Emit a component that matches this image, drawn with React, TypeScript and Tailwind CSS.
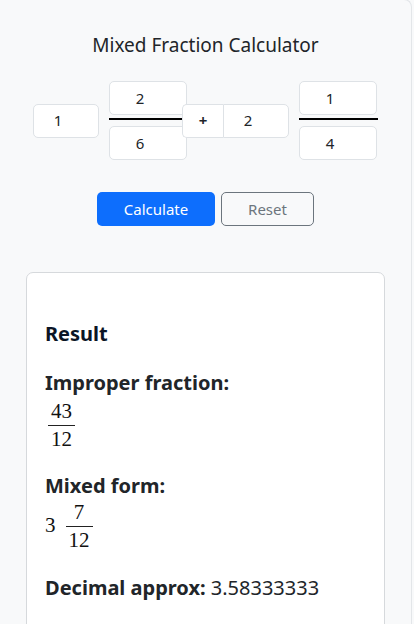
import React from "react";

const sans = { fontFamily: '"Noto Sans", "Open Sans", sans-serif' };
const serif = { fontFamily: '"Liberation Serif", "DejaVu Serif", serif' };

function Frac({ n, d, w }: { n: string; d: string; w: string }) {
  return (
    <span className="inline-flex flex-col items-center text-[21px] text-[#111]" style={serif}>
      <span className="leading-[24px] h-[24px]">{n}</span>
      <span className={`block h-px bg-[#222] ${w} mt-[2px]`}></span>
      <span className="leading-[24px] h-[24px] mt-[1px]">{d}</span>
    </span>
  );
}

export default function App() {
  const input =
    "h-[34px] bg-white border border-[#dee2e6] rounded-[5px] flex items-center justify-center pr-[16px] text-[15px] text-[#212529]";
  return (
    <div className="w-[414px] h-[624px] bg-[#f8f9fa] overflow-hidden" style={sans}>
      <div className="w-[412px] h-[640px] border-r border-t border-[#e3e6e9] rounded-tr-[8px] -mt-px">
        <div className="pt-[32px] text-center text-[19px] leading-[26px] text-[#212529]">
          Mixed Fraction Calculator
        </div>
        <div className="mt-[23px] flex items-center justify-center">
          <div className={`${input} w-[66px]`}>1</div>
          <div className="ml-[10px] w-[78px] flex flex-col">
            <div className={`${input} w-[78px]`}>2</div>
            <div className="h-[2px] bg-black w-[73px] mt-[3px]"></div>
            <div className={`${input} w-[78px] mt-[6px]`}>6</div>
          </div>
          <div className="-ml-[5px] relative h-[34px] w-[41px] bg-white border border-r-0 border-[#dee2e6] rounded-l-[5px] flex items-center justify-center text-[15px] font-bold text-[#212529]">
            +
          </div>
          <div className={`${input} w-[66px] rounded-l-none`}>2</div>
          <div className="ml-[10px] w-[79px] flex flex-col">
            <div className={`${input} w-[78px]`}>1</div>
            <div className="h-[2px] bg-black w-[79px] mt-[3px]"></div>
            <div className={`${input} w-[78px] mt-[6px]`}>4</div>
          </div>
        </div>
        <div className="mt-[32px] flex justify-center gap-[6px]">
          <div className="w-[118px] h-[34px] rounded-[5px] bg-[#0d6efd] text-white text-[15px] flex items-center justify-center">
            Calculate
          </div>
          <div className="w-[93px] h-[34px] rounded-[5px] border border-[#6c757d] text-[#6c757d] text-[15px] flex items-center justify-center bg-[#f8f9fa]">
            Reset
          </div>
        </div>
        <div className="mt-[46px] ml-[26px] w-[359px] h-[400px] bg-white border border-[#d6d9dc] rounded-[7px] px-[18px] pt-[49px]">
          <div className="text-[20px] leading-[24px] font-bold text-[#0b1526]">Result</div>
          <div className="mt-[25px] text-[20px] leading-[24px] font-bold text-[#212529]">
            Improper fraction:
          </div>
          <div className="mt-[4px] ml-[3px]">
            <Frac n="43" d="12" w="w-[27px]" />
          </div>
          <div className="mt-[23px] text-[20px] leading-[24px] font-bold text-[#212529]">Mixed form:</div>
          <div className="mt-[2px] flex items-center text-[21px] text-[#111]" style={serif}>
            <span className="mr-[10px]">3</span>
            <Frac n="7" d="12" w="w-[27px]" />
          </div>
          <div className="mt-[24px] text-[20px] leading-[24px] text-[#212529]">
            <span className="font-bold">Decimal approx:</span> 3.58333333
          </div>
        </div>
      </div>
    </div>
  );
}
